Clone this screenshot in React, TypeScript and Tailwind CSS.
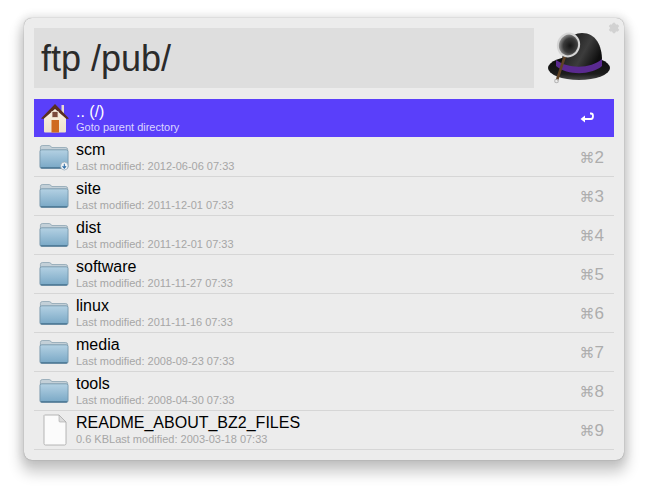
import { Settings } from "lucide-react";

const rows = [
  { title: "scm", sub: "Last modified: 2012-06-06 07:33", key: "2", shared: true },
  { title: "site", sub: "Last modified: 2011-12-01 07:33", key: "3" },
  { title: "dist", sub: "Last modified: 2011-12-01 07:33", key: "4" },
  { title: "software", sub: "Last modified: 2011-11-27 07:33", key: "5" },
  { title: "linux", sub: "Last modified: 2011-11-16 07:33", key: "6" },
  { title: "media", sub: "Last modified: 2008-09-23 07:33", key: "7" },
  { title: "tools", sub: "Last modified: 2008-04-30 07:33", key: "8" },
  { title: "README_ABOUT_BZ2_FILES", sub: "0.6 KBLast modified: 2003-03-18 07:33", key: "9", file: true },
];

const FolderIcon: React.FC<{ shared?: boolean }> = ({ shared }) => (
  <svg width="30" height="28" viewBox="0 0 32 28" preserveAspectRatio="none" className="-ml-[2px]">
    <defs>
      <linearGradient id="folderBody" x1="0" y1="0" x2="0" y2="1">
        <stop offset="0" stopColor="#b4d1e3" />
        <stop offset="1" stopColor="#78a7c5" />
      </linearGradient>
    </defs>
    <path d="M1.5 4.5 Q1.5 2.5 3.5 2.5 H11 Q12.5 2.5 13.5 4.5 H28.5 Q30.5 4.5 30.5 6.5 V8 H1.5 Z" fill="#c3d0d8" stroke="#8ba2b0" strokeWidth="0.8" />
    <path d="M1 8.5 Q1 6.8 3 6.8 H29 Q31 6.8 31 8.5 V23.5 Q31 25.5 29 25.5 H3 Q1 25.5 1 23.5 Z" fill="url(#folderBody)" stroke="#6d8ea3" strokeWidth="0.8" />
    <path d="M2 24.8 H30" stroke="#3f6a86" strokeWidth="1" />
    {shared && (
      <g>
        <circle cx="27" cy="23" r="4" fill="#f2f5f7" stroke="#8fa3b0" strokeWidth="0.7" />
        <path d="M27 20.8 V25 M25.1 23.2 L27 25.2 L28.9 23.2" fill="none" stroke="#2f6fa8" strokeWidth="1.1" />
      </g>
    )}
  </svg>
);

const FileIcon = () => (
  <svg width="24" height="32" viewBox="0 0 24 32">
    <path d="M1.5 1 H16 L23 8 V29.5 Q23 31 21.5 31 H2.5 Q1 31 1 29.5 V1.5 Z" fill="#fbfbfb" stroke="#a6a6a6" strokeWidth="0.8" />
    <path d="M16 1 V7 Q16 8 17 8 H23 Z" fill="#dcdcdc" stroke="#a6a6a6" strokeWidth="0.6" />
  </svg>
);

const HomeIcon = () => (
  <svg width="30" height="32" viewBox="0 0 30 32">
    <defs>
      <linearGradient id="houseWall" x1="0" y1="0" x2="0" y2="1">
        <stop offset="0" stopColor="#fbf4e6" />
        <stop offset="1" stopColor="#efe2cc" />
      </linearGradient>
    </defs>
    <rect x="21.5" y="3" width="2.5" height="9" fill="#e8d9d2" />
    <path d="M4 15 L15 5 L26 15 V29.5 Q26 30.5 25 30.5 H5 Q4 30.5 4 29.5 Z" fill="url(#houseWall)" />
    <path d="M1 16.5 L15 2 L29 16.5 L26.5 17 L15 7 L3.5 17 Z" fill="#5a2f22" />
    <rect x="11.5" y="18" width="7.5" height="12.5" fill="#cf6a1f" />
    <rect x="12" y="9.5" width="6" height="6" fill="#7b4a3a" stroke="#efe4d3" strokeWidth="0.8" />
  </svg>
);

const HatIcon = () => (
  <svg width="66" height="52" viewBox="0 0 66 52">
    <defs>
      <linearGradient id="hatCrown" x1="0" y1="0" x2="1" y2="0.5">
        <stop offset="0" stopColor="#0c0c0c" />
        <stop offset="0.65" stopColor="#3c3c3c" />
        <stop offset="1" stopColor="#0e0e0e" />
      </linearGradient>
      <linearGradient id="hatBrim" x1="0" y1="0" x2="0" y2="1">
        <stop offset="0" stopColor="#0a0a0a" />
        <stop offset="0.75" stopColor="#1c1c1c" />
        <stop offset="1" stopColor="#4a4a4a" />
      </linearGradient>
      <radialGradient id="lens" cx="0.58" cy="0.5" r="0.58">
        <stop offset="0" stopColor="#151515" />
        <stop offset="0.55" stopColor="#3a3a3a" />
        <stop offset="1" stopColor="#a8a8a8" />
      </radialGradient>
    </defs>
    <ellipse cx="33" cy="36" rx="31" ry="12" fill="url(#hatBrim)" />
    <path d="M16 32 C16 12 24 1 36 1 C50 1 56 14 56 28 C46 40 24 40 16 32 Z" fill="url(#hatCrown)" />
    <path d="M10 28 C24 38 46 36 56 27 L56 34 C46 43 22 44 10 34 Z" fill="#5a2a90" />
    <path d="M19 24 L11 48" stroke="#5f4225" strokeWidth="2.6" />
    <circle cx="10.5" cy="49" r="1.8" fill="none" stroke="#b5b5b5" strokeWidth="1.1" />
    <ellipse cx="22.5" cy="13" rx="10.5" ry="11.5" transform="rotate(20 22.5 13)" fill="url(#lens)" stroke="#d4d4d4" strokeWidth="2" />
  </svg>
);

const ReturnIcon = () => (
  <svg width="14" height="12" viewBox="0 0 14 12" fill="none">
    <path d="M10 1.5 H11 Q13 1.5 13 4 Q13 7 11 7 H3" stroke="#ffffff" strokeWidth="1.8" />
    <path d="M0.5 7 L5 3.5 V10.5 Z" fill="#ffffff" />
  </svg>
);

export default function App() {
  return (
    <div className="min-h-[490px] bg-white pl-[24px] pt-[18px] font-['Liberation_Sans',Arial,sans-serif]">
      <div className="relative h-[442px] w-[600px] rounded-[8px] bg-[#ececec] px-[10px] pt-[10px] shadow-[0_10px_14px_3px_rgba(0,0,0,0.2),0_0_9px_3px_rgba(0,0,0,0.09),0_0_1px_rgba(0,0,0,0.45)]">
        <Settings className="absolute right-[4px] top-[4px] h-[12px] w-[12px] text-[#d2d2d2]" fill="#d2d2d2" strokeWidth={2} />
        <div className="flex h-[60px] items-start">
          <div className="flex h-[60px] w-[500px] shrink-0 items-center bg-[#dedede] pl-[7px] pt-[2px] text-[36px] text-[#2b2b2b]">ftp /pub/</div>
          <div className="ml-[12px] mt-[4px] shrink-0">
            <HatIcon />
          </div>
        </div>
        <div className="mt-[11px]">
          <div className="mb-px flex h-[38px] items-center bg-[#5a3ffa] text-white">
            <div className="flex w-[42px] justify-center">
              <HomeIcon />
            </div>
            <div className="flex-1 pb-[2px]">
              <div className="text-[16px] leading-[20px]">.. (/)</div>
              <div className="text-[11px] leading-[10px] text-[#dcd6ff]">Goto parent directory</div>
            </div>
            <div className="mr-[16px] flex w-[22px] justify-center">
              <ReturnIcon />
            </div>
          </div>
          {rows.map((r) => (
            <div key={r.key} className="flex h-[39px] items-center border-b border-[#d6d6d6]">
              <div className="flex w-[42px] justify-center">
                {r.file ? <FileIcon /> : <FolderIcon shared={r.shared} />}
              </div>
              <div className="flex-1">
                <div className="text-[16px] leading-[18px] text-black">{r.title}</div>
                <div className="text-[11px] leading-[15px] text-[#a6a6a6]">{r.sub}</div>
              </div>
              <div className="mr-[10px] flex items-baseline pt-[2px] text-[#adadad]">
                <span className="font-['DejaVu_Sans',sans-serif] text-[15px]">⌘</span>
                <span className="text-[17px]">{r.key}</span>
              </div>
            </div>
          ))}
        </div>
      </div>
    </div>
  );
}
